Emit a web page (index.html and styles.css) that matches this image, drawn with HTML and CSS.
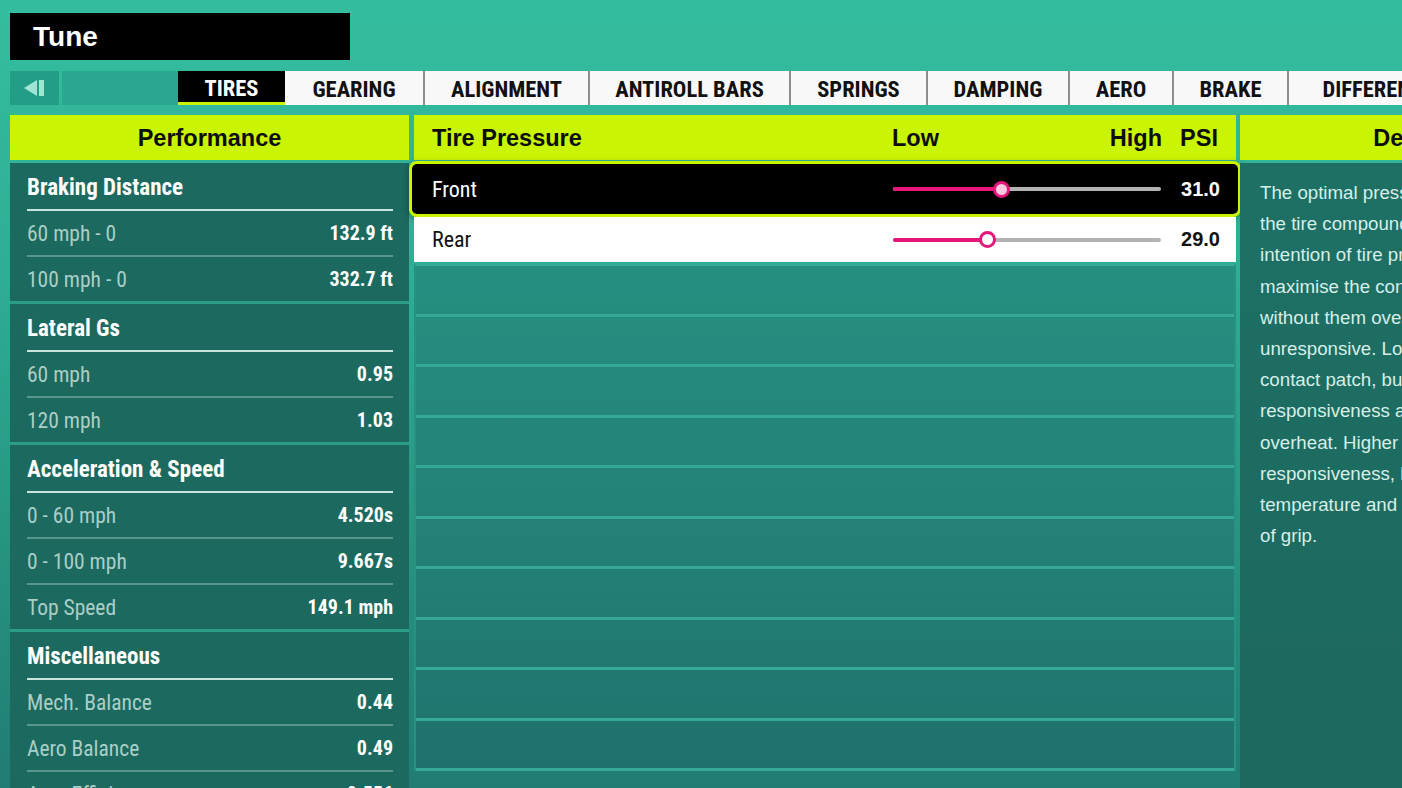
FILE: index.html
```html
<!doctype html>
<html lang="en">
  <head>
    <meta charset="UTF-8" />
    <meta name="viewport" content="width=device-width, initial-scale=1.0" />
    <title>Tune</title>
    <link rel="stylesheet" href="styles.css">
  </head>
  <body>
    <div class="Title">Tune</div>

    <nav class="Tabs">
      <div class="Tabs-back">
        <svg width="22" height="18" viewBox="0 0 22 18">
          <polygon points="0,9 13,1 13,17" fill="#a3e3d3" />
          <rect x="15" y="1" width="5" height="16" fill="#a3e3d3" />
        </svg>
      </div>
      <div class="Tabs-spacer"></div>
      <div class="Tab Tab--active" style="width:107px">TIRES</div>
      <div class="Tab Tab--first" style="width:138px">GEARING</div>
      <div class="Tab" style="width:165px">ALIGNMENT</div>
      <div class="Tab" style="width:201px">ANTIROLL BARS</div>
      <div class="Tab" style="width:137px">SPRINGS</div>
      <div class="Tab" style="width:142px">DAMPING</div>
      <div class="Tab" style="width:104px">AERO</div>
      <div class="Tab" style="width:115px">BRAKE</div>
      <div class="Tab" style="width:200px">DIFFERENTIAL</div>
    </nav>

    <main class="Panels">
      <!-- Performance -->
      <section class="Col Col--left">
        <div class="Head Head--center">Performance</div>
        <div class="Stats">
          <div class="Sec">
            <div class="Sec-title">Braking Distance</div>
            <div class="Stat"><span>60 mph - 0</span><b>132.9 ft</b></div>
            <div class="Stat"><span>100 mph - 0</span><b>332.7 ft</b></div>
          </div>
          <div class="Sec">
            <div class="Sec-title">Lateral Gs</div>
            <div class="Stat"><span>60 mph</span><b>0.95</b></div>
            <div class="Stat"><span>120 mph</span><b>1.03</b></div>
          </div>
          <div class="Sec">
            <div class="Sec-title">Acceleration &amp; Speed</div>
            <div class="Stat"><span>0 - 60 mph</span><b>4.520s</b></div>
            <div class="Stat"><span>0 - 100 mph</span><b>9.667s</b></div>
            <div class="Stat"><span>Top Speed</span><b>149.1 mph</b></div>
          </div>
          <div class="Sec">
            <div class="Sec-title">Miscellaneous</div>
            <div class="Stat"><span>Mech. Balance</span><b>0.44</b></div>
            <div class="Stat"><span>Aero Balance</span><b>0.49</b></div>
            <div class="Stat"><span>Aero Efficiency</span><b>0.556</b></div>
          </div>
        </div>
      </section>

      <!-- Tire pressure -->
      <section class="Col Col--mid">
        <div class="Head Head--row">
          <span class="Row-name">Tire Pressure</span>
          <span class="Row-range"><span>Low</span><span>High</span></span>
          <span class="Row-value">PSI</span>
        </div>
        <div class="Rows">
          <div class="Row Row--selected">
            <span class="Row-name">Front</span>
            <span class="Row-range">
              <span class="Slider">
                <span class="Slider-fill" style="width:40.3%"></span>
                <span class="Slider-knob Slider-knob--focus" style="left:40.3%"></span>
              </span>
            </span>
            <span class="Row-value">31.0</span>
          </div>
          <div class="Row">
            <span class="Row-name">Rear</span>
            <span class="Row-range">
              <span class="Slider">
                <span class="Slider-fill" style="width:35.4%"></span>
                <span class="Slider-knob" style="left:35.4%"></span>
              </span>
            </span>
            <span class="Row-value">29.0</span>
          </div>
          <div class="Empty">
            <div></div><div></div><div></div><div></div><div></div>
            <div></div><div></div><div></div><div></div><div></div>
          </div>
        </div>
      </section>

      <!-- Description -->
      <section class="Col Col--right">
        <div class="Head Head--center">Description</div>
        <div class="Desc">
          <div>The optimal pressure depends on</div>
          <div>the tire compound used. The</div>
          <div>intention of tire pressure is to</div>
          <div>maximise the contact patch</div>
          <div>without them overheating or being</div>
          <div>unresponsive. Lower pressure increases</div>
          <div>contact patch, but reduces</div>
          <div>responsiveness and they can</div>
          <div>overheat. Higher pressure improves</div>
          <div>responsiveness, but reduces</div>
          <div>temperature and contact patch, at the cost</div>
          <div>of grip.</div>
        </div>
      </section>
    </main>
  </body>
</html>
```

FILE: styles.css
```css
:root {
  --lime: #c9f404;
  --panel: #1c695f;
  --stripe: #2c9d89;
  --pink: #e6167a;
  --cond: "Roboto Condensed", "Liberation Sans Narrow", "DejaVu Sans Condensed", "DejaVu Sans", sans-serif;
}

html,
body {
  margin: 0;
  width: 1402px;
  height: 788px;
  overflow: hidden;
}

body {
  font-family: "Liberation Sans", Arial, sans-serif;
  background: linear-gradient(180deg, #35bd9f 0%, #2eae95 35%, #26937f 70%, #217c74 100%);
}

.Title {
  margin: 13px 0 0 10px;
  width: 317px;
  height: 47px;
  padding-left: 23px;
  background: #000;
  color: #fff;
  font-weight: 700;
  font-size: 28px;
  line-height: 48px;
}

/* tabs */
.Tabs {
  display: flex;
  margin: 11px 0 0 10px;
  height: 34px;
  white-space: nowrap;
}

.Tabs-back {
  flex: none;
  width: 49px;
  background: #249d87;
  display: flex;
  align-items: center;
  padding-left: 14px;
  box-sizing: border-box;
}

.Tabs-spacer {
  flex: none;
  width: 116px;
  margin-left: 3px;
  background: #2aa78f;
}

.Tab {
  flex: none;
  box-sizing: border-box;
  background: #f8f8f8;
  color: #111;
  border-left: 2px solid #8d8d8d;
  font-family: var(--cond);
  font-stretch: condensed;
  font-weight: 700;
  font-size: 22.5px;
  line-height: 37px;
  text-align: center;
}

.Tab--first {
  border-left: 0;
}

.Tab--active {
  border-left: 0;
  background: #000;
  color: #fff;
  line-height: 35px;
  border-bottom: 3px solid var(--lime);
}

/* columns */
.Panels {
  display: flex;
  gap: 5px;
  margin: 10px 0 0 10px;
}

.Col {
  flex: none;
}

.Col--left {
  width: 399px;
}

.Col--mid {
  width: 822px;
}

.Col--right {
  width: 396px;
  margin-left: -1px;
}

.Head {
  height: 45px;
  background: var(--lime);
  color: #0d0d0d;
  font-weight: 700;
  font-size: 23.5px;
  line-height: 46px;
}

.Head--center {
  text-align: center;
}

/* performance stats */
.Stats {
  margin-top: 3px;
  background: var(--stripe);
  height: 640px;
}

.Sec {
  background: var(--panel);
  padding: 0 16px 0 17px;
}

.Sec + .Sec {
  margin-top: 3px;
}

.Sec-title {
  height: 46px;
  line-height: 49px;
  border-bottom: 2px solid #c7e4dd;
  color: #fff;
  font-family: var(--cond);
  font-stretch: condensed;
  font-weight: 700;
  font-size: 23px;
}

.Stat {
  display: flex;
  justify-content: space-between;
  height: 44px;
  line-height: 45px;
  border-bottom: 2px solid #57978d;
  font-family: var(--cond);
  font-stretch: condensed;
}

.Stat:last-child {
  border-bottom: 0;
  height: 44px;
}

.Stat span {
  color: #a9cfc7;
  font-size: 21.5px;
}

.Stat b {
  color: #fff;
  font-size: 20px;
}

/* tire pressure */
.Head--row {
  display: flex;
  padding: 0 18px;
}

.Head--row .Row-value {
  width: 56px;
}

.Row-name {
  flex: 1;
}

.Row-range {
  flex: none;
  width: 270px;
  display: flex;
  justify-content: space-between;
  align-items: center;
}

.Row-value {
  flex: none;
  width: 58px;
  text-align: right;
}

.Rows {
  padding-top: 6px;
}

.Row {
  display: flex;
  align-items: center;
  height: 45px;
  padding: 0 16px 0 18px;
  background: #fff;
  color: #111;
}

.Row .Row-name {
  font-family: var(--cond);
  font-stretch: condensed;
  font-size: 22px;
}

.Row .Row-value {
  font-weight: 700;
  font-size: 20px;
}

.Row--selected {
  height: 46px;
  margin-bottom: 5px;
  background: #000;
  color: #fff;
  border-radius: 3px;
  box-shadow: 0 0 0 2px #000, 0 0 0 5px var(--lime), 0 2px 6px 5px rgba(0, 0, 0, 0.35);
}

.Slider {
  position: relative;
  display: block;
  width: 268px;
  height: 4px;
  margin-left: 1px;
  border-radius: 2px;
  background: #b3b3b3;
}

.Slider-fill {
  display: block;
  height: 100%;
  border-radius: 2px;
  background: var(--pink);
}

.Slider-knob {
  position: absolute;
  top: 50%;
  width: 11px;
  height: 11px;
  margin: -8.5px 0 0 -8.5px;
  border: 3px solid var(--pink);
  border-radius: 50%;
  background: #fff;
}

.Slider-knob--focus {
  background: #f9c9e0;
}

.Empty {
  margin-top: 1px;
  border-left: 2px solid #289282;
  border-right: 2px solid #289282;
  border-top: 3px solid #36ab98;
  background: linear-gradient(180deg, #268f80 0%, #237f76 60%, #1f716d 100%);
}

.Empty div {
  height: 47.5px;
  border-bottom: 3px solid #35a896;
}

/* description */
.Desc {
  margin-top: 3px;
  height: 640px;
  padding: 14px 0 0 20px;
  box-sizing: border-box;
  background: linear-gradient(180deg, #1e7065 0%, #1c675e 100%);
  color: #d6efe8;
  font-family: "Liberation Sans", Arial, sans-serif;
  font-size: 18.7px;
  line-height: 31.2px;
  white-space: nowrap;
}
```
